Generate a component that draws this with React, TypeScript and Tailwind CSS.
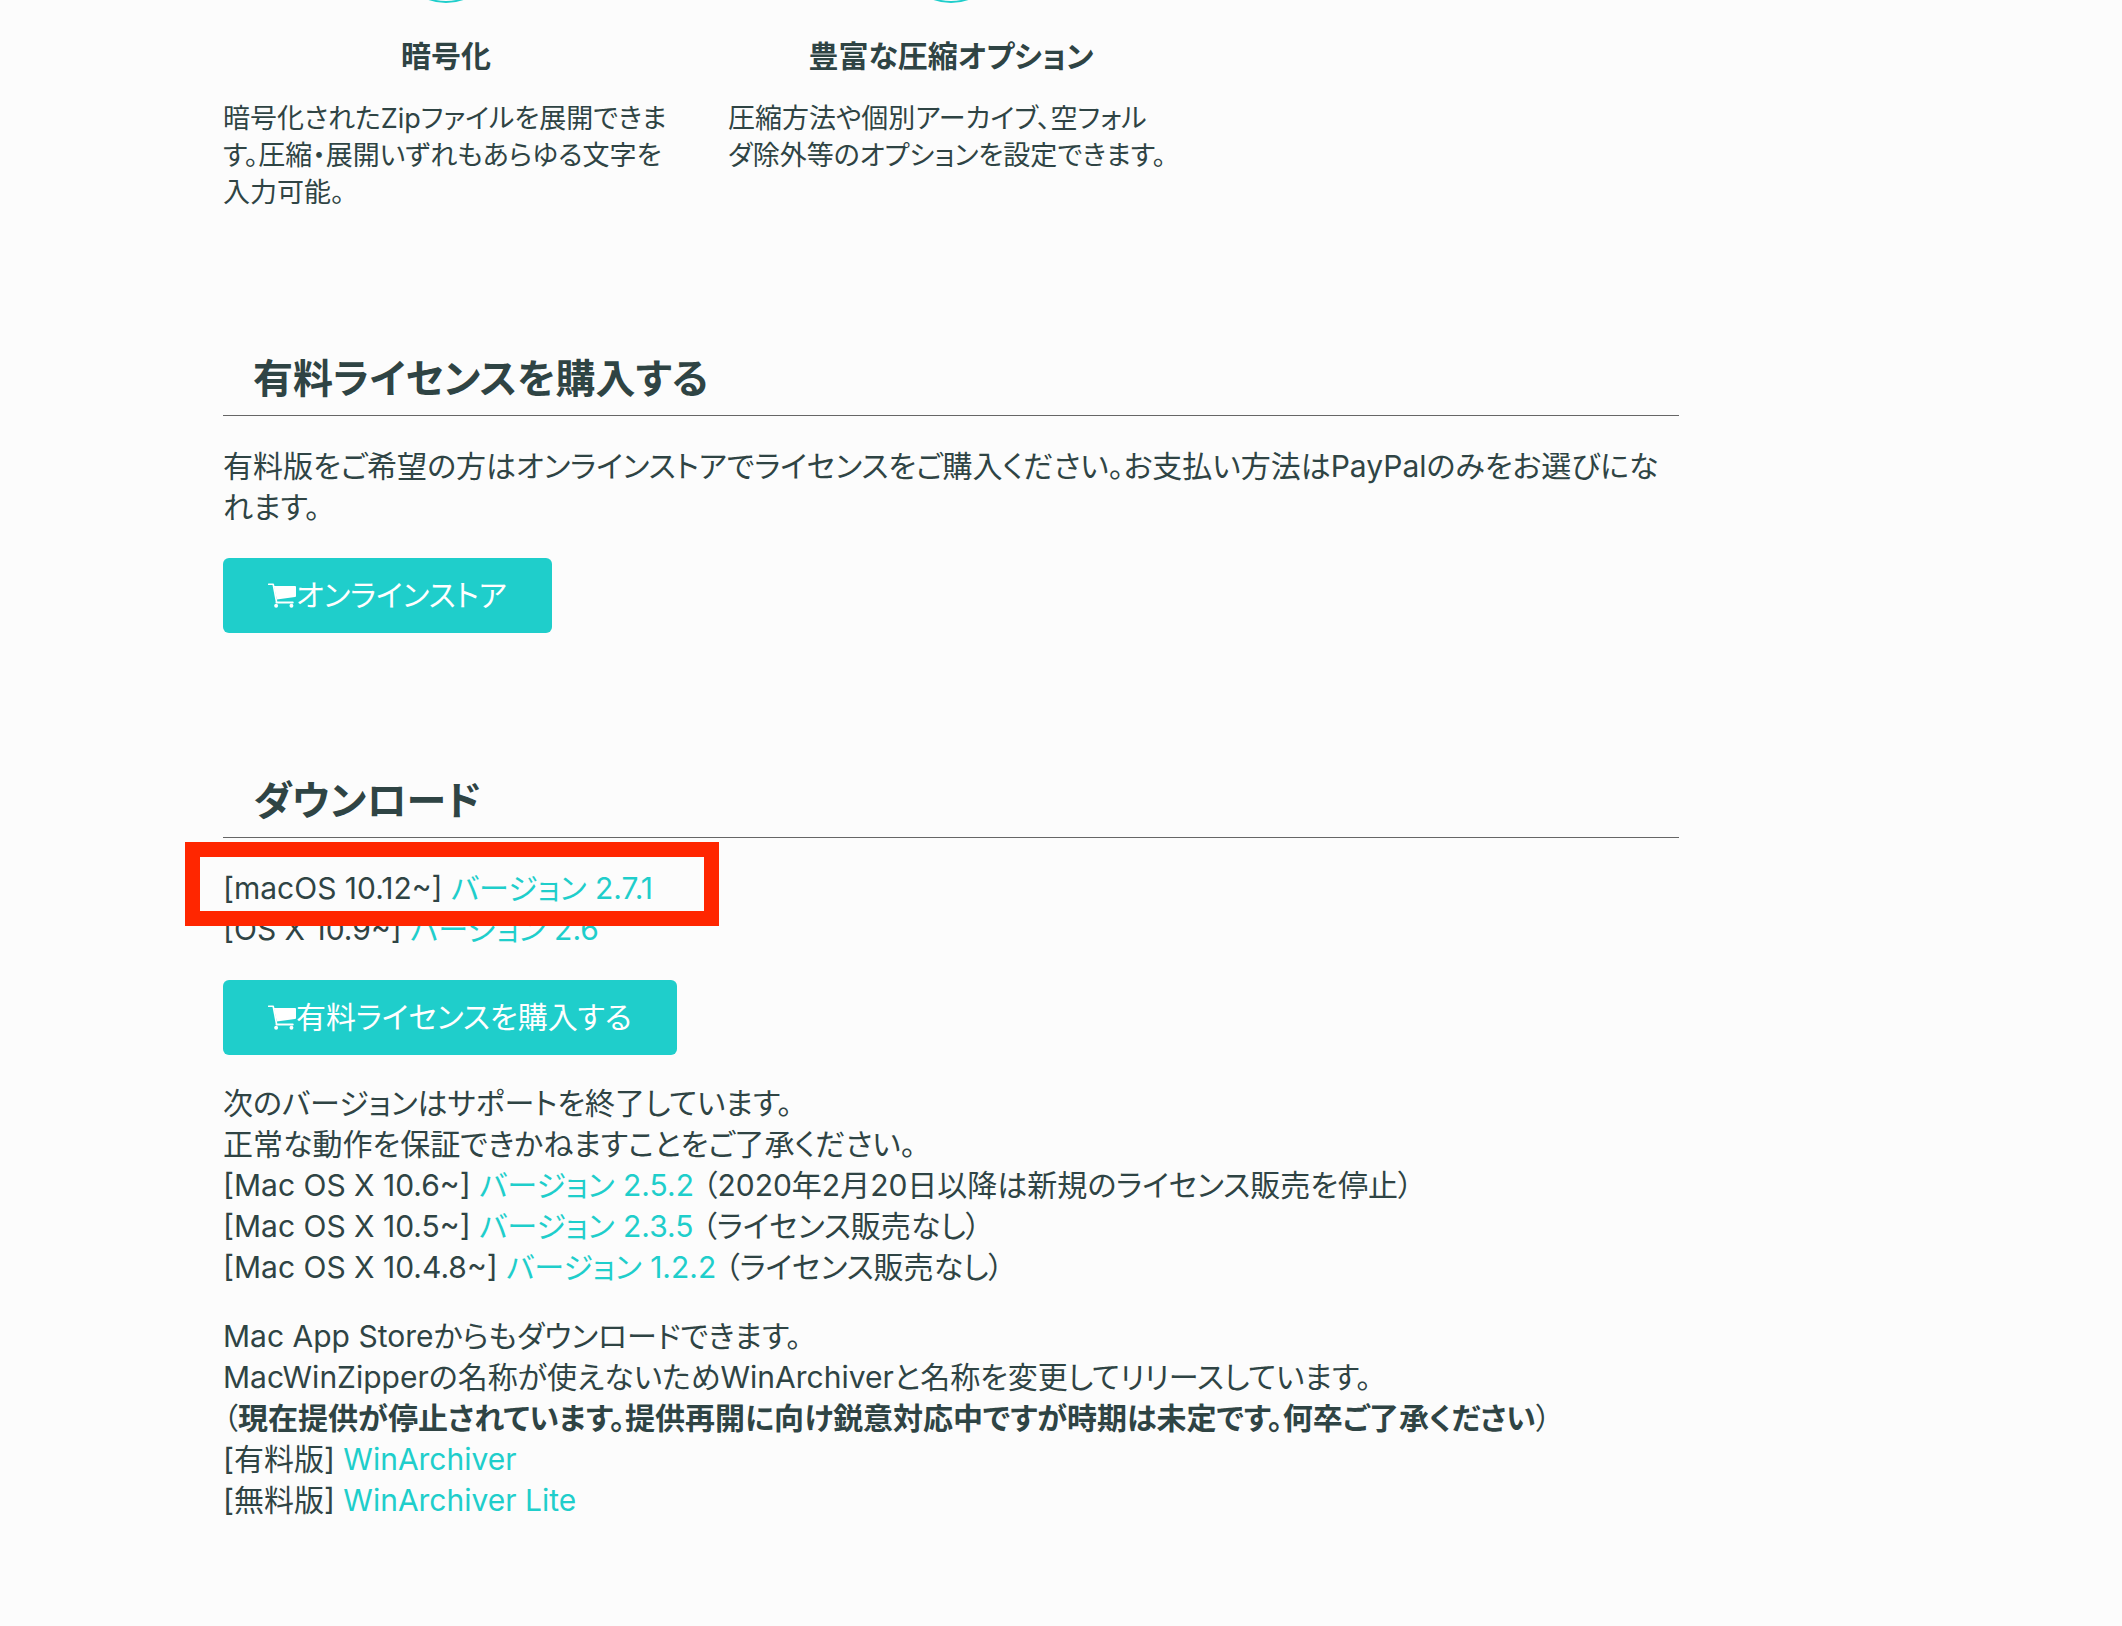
import React from 'react';

interface Feature {
  title: string;
  text: string;
}

interface Release {
  os: string;
  version: string;
  note?: string;
}

const features: Feature[] = [
  {
    title: '暗号化',
    text: '暗号化されたZipファイルを展開できま\nす。圧縮・展開いずれもあらゆる文字を\n入力可能。'
  },
  {
    title: '豊富な圧縮オプション',
    text: '圧縮方法や個別アーカイブ、空フォル\nダ除外等のオプションを設定できます。'
  }
];

const oldReleases: Release[] = [
  { os: 'Mac OS X 10.6~', version: 'バージョン 2.5.2', note: '（2020年2月20日以降は新規のライセンス販売を停止）' },
  { os: 'Mac OS X 10.5~', version: 'バージョン 2.3.5', note: '（ライセンス販売なし）' },
  { os: 'Mac OS X 10.4.8~', version: 'バージョン 1.2.2', note: '（ライセンス販売なし）' }
];

const CartIcon: React.FC = () => (
  <svg width="28" height="25" viewBox="0 0 86 75" fill="currentColor" aria-hidden="true">
    <path d="M2 3h14l10 53" fill="none" stroke="currentColor" strokeWidth="5" strokeLinecap="round" strokeLinejoin="round" />
    <path d="M18 8h65q3 0 3 3v28q0 3-3 3L27 50z" />
    <path d="M26 59h50" fill="none" stroke="currentColor" strokeWidth="6" strokeLinecap="round" />
    <circle cx="25" cy="69" r="6" />
    <circle cx="72" cy="69" r="6" />
  </svg>
);

const TextLink: React.FC<{ children: React.ReactNode }> = ({ children }) => (
  <a href="#" className="text-[#1fcecb] hover:underline">{children}</a>
);

const StoreButton: React.FC<{ children: React.ReactNode }> = ({ children }) => (
  <a
    href="#"
    className="inline-flex h-[75px] items-center rounded-md bg-[#1fcecb] px-[45px] text-white hover:opacity-80"
  >
    <CartIcon />
    <span>{children}</span>
  </a>
);

const SectionTitle: React.FC<{ children: React.ReactNode }> = ({ children }) => (
  <h2 className="border-b border-[#666] pb-2 pl-[30px] text-[40px] leading-[56px] font-bold">{children}</h2>
);

const ReleaseLine: React.FC<{ release: Release }> = ({ release }) => (
  <li>
    [{release.os}] <TextLink>{release.version}</TextLink> {release.note}
  </li>
);

export default function App() {
  return (
    <div className="min-h-screen overflow-hidden bg-[#fcfcfc] px-[223px] font-['Inter','Noto_Sans_CJK_JP',sans-serif] text-[30px] leading-[41px] text-[#2f4444] [font-feature-settings:'palt']">
      <main className="max-w-[1456px]">
        {/* Features */}
        <section className="grid grid-cols-3 gap-[59px]">
          {features.map((feature) => (
            <div key={feature.title}>
              <div className="flex h-8 items-start justify-center">
                <svg width="100" height="3" viewBox="0 97 100 3" fill="none" stroke="#1fcecb" strokeWidth="2">
                  <circle cx="50" cy="50" r="49" />
                </svg>
              </div>
              <h3 className="mb-5 text-center text-[30px] leading-12 font-bold">{feature.title}</h3>
              <p className="text-[27px] leading-[37px] whitespace-pre-line">{feature.text}</p>
            </div>
          ))}
        </section>

        {/* License */}
        <section className="mt-[140px]">
          <SectionTitle>有料ライセンスを購入する</SectionTitle>
          <p className="my-[30px]">
            有料版をご希望の方はオンラインストアでライセンスをご購入ください。お支払い方法はPayPalのみをお選びになれます。
          </p>
          <StoreButton>オンラインストア</StoreButton>
        </section>

        {/* Download */}
        <section className="mt-[140px]">
          <SectionTitle>ダウンロード</SectionTitle>
          <ul className="my-[30px]">
            <li className="relative">
              [macOS 10.12~] <TextLink>バージョン 2.7.1</TextLink>
              <span className="pointer-events-none absolute -top-[26px] -left-[38px] h-[84px] w-[534px] border-[15px] border-[#ff2600]" />
            </li>
            <ReleaseLine release={{ os: 'OS X 10.9~', version: 'バージョン 2.6' }} />
          </ul>
          <StoreButton>有料ライセンスを購入する</StoreButton>

          <p className="mt-7">
            次のバージョンはサポートを終了しています。
            <br />
            正常な動作を保証できかねますことをご了承ください。
          </p>
          <ul>
            {oldReleases.map((release) => (
              <ReleaseLine key={release.os} release={release} />
            ))}
          </ul>

          <p className="mt-7">
            Mac App Storeからもダウンロードできます。
            <br />
            MacWinZipperの名称が使えないためWinArchiverと名称を変更してリリースしています。
            <br />
            （<strong>現在提供が停止されています。提供再開に向け鋭意対応中ですが時期は未定です。何卒ご了承ください</strong>）
            <br />
            [有料版] <TextLink>WinArchiver</TextLink>
            <br />
            [無料版] <TextLink>WinArchiver Lite</TextLink>
          </p>
        </section>
      </main>
    </div>
  );
}
